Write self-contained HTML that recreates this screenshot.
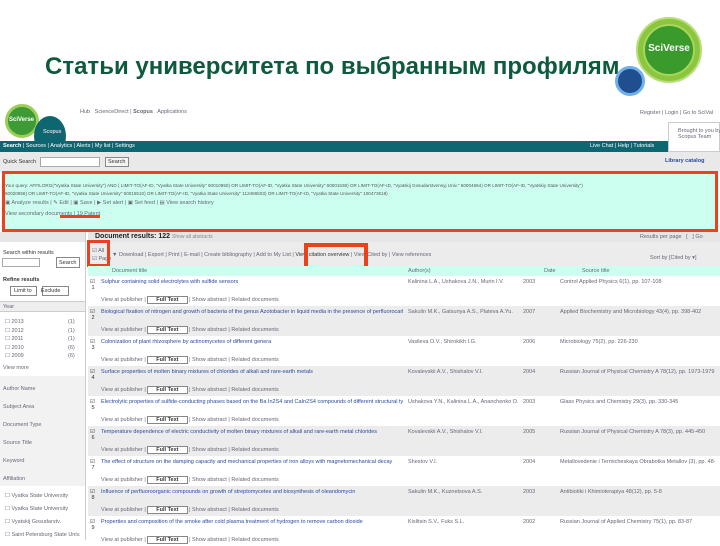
<!DOCTYPE html>
<html><head><meta charset="utf-8"><style>
*{margin:0;padding:0;box-sizing:border-box}
body{width:720px;height:540px;overflow:hidden;background:#fff;font-family:"Liberation Sans",sans-serif;position:relative}
.a{position:absolute}
.t{font-size:5.5px;color:#667;white-space:nowrap}
.l{color:#2a4aa0}
</style></head><body>
<div class="a" style="left:45px;top:53px;font-size:24px;color:#0d5a3c;font-weight:bold;font-family:'Liberation Sans',sans-serif">Статьи университета по выбранным профилям</div>
<!-- big logo -->
<div class="a" style="left:636px;top:17px;width:66px;height:66px;border-radius:50%;background:#8cc63f;border:2px solid #b8dd7a"></div>
<div class="a" style="left:643px;top:24px;width:52px;height:52px;border-radius:50%;background:#3a9a2c;border:2px solid #a6d65a"></div>
<div class="a" style="left:636px;top:43px;width:66px;text-align:center;color:#fff;font-size:10px;font-weight:bold">SciVerse</div>
<div class="a" style="left:615px;top:66px;width:30px;height:30px;border-radius:50%;background:#1f4f8f;border:3px solid #6fb0e8"></div>
<!-- screenshot header -->
<div class="a" style="left:5px;top:104px;width:34px;height:34px;border-radius:50%;background:#3e9a35;border:3px solid #9ccf5a"></div>
<div class="a t" style="left:9px;top:117px;color:#fff;font-weight:bold;font-size:6px">SciVerse</div>
<div class="a" style="left:34px;top:116px;width:32px;height:40px;border-radius:50%;background:#0e6670"></div>
<div class="a t" style="left:43px;top:129px;color:#fff">Scopus</div>
<div class="a t" style="left:80px;top:109px">Hub &nbsp; ScienceDirect | <b>Scopus</b> &nbsp; Applications</div>
<div class="a t" style="left:640px;top:110px">Register | Login | Go to SciVal</div>
<div class="a" style="left:0;top:141px;width:720px;height:11px;background:#0e6670"></div>
<div class="a t" style="left:3px;top:143px;color:#fff"><b>Search</b> | Sources | Analytics | Alerts | My list | Settings</div>
<div class="a t" style="left:590px;top:143px;color:#fff">Live Chat | Help | Tutorials</div>
<div class="a" style="left:668px;top:122px;width:52px;height:30px;background:#fff;border:1px solid #ccc"></div>
<div class="a t" style="left:678px;top:128px">Brought to you by<br>Scopus Team</div>
<div class="a" style="left:0;top:152px;width:720px;height:19px;background:#e9e9e9"></div>
<div class="a t" style="left:3px;top:159px;color:#333">Quick Search</div>
<div class="a" style="left:40px;top:157px;width:60px;height:10px;background:#fff;border:1px solid #aaa"></div>
<div class="a" style="left:105px;top:157px;width:24px;height:10px;background:#f4f4f4;border:1px solid #888"></div>
<div class="a t" style="left:108px;top:159px;color:#333">Search</div>
<div class="a t" style="left:665px;top:158px;color:#2a4aa0;font-weight:bold">Library catalog</div>
<!-- query box -->
<div class="a" style="left:2px;top:171px;width:716px;height:61px;border:3px solid #e8421e;background:#ccfff0"></div>
<div class="a t" style="left:5px;top:182px;color:#555;font-size:4.6px;line-height:8px">Your query: AFFILORG("Vyatka State University") AND ( LIMIT-TO(AF-ID, "Vyatka State University" 60010950) OR LIMIT-TO(AF-ID, "Vyatka State University" 60001638) OR LIMIT-TO(AF-ID, "Vyatskij Gosudarstvennyj Univ." 60004664) OR LIMIT-TO(AF-ID, "Vyatskiy State University")<br>60020958) OR LIMIT-TO(AF-ID, "Vyatka State University" 60015510) OR LIMIT-TO(AF-ID, "Vyatka State University" 112486503) OR LIMIT-TO(AF-ID, "Vyatka State University" 100473618)</div>
<div class="a t" style="left:5px;top:200px">▣ Analyze results | ✎ Edit | ▣ Save | ▶ Set alert | ▣ Set feed | ▤ View search history</div>
<div class="a t" style="left:5px;top:211px">View secondary documents | 19 Patent</div>
<div class="a" style="left:60px;top:215px;width:40px;height:3px;background:#e8421e"></div>
<!-- sidebar -->
<div class="a" style="left:0;top:232px;width:86px;height:308px;background:#fff;border-right:1px solid #ccc"></div>
<div class="a" style="left:0;top:232px;width:85px;height:10px;background:#e6e6e6"></div>
<div class="a t" style="left:3px;top:250px;color:#333">Search within results</div>
<div class="a" style="left:2px;top:258px;width:38px;height:9px;background:#fff;border:1px solid #aaa"></div>
<div class="a" style="left:56px;top:257px;width:24px;height:11px;background:#fff;border:1px solid #888"></div>
<div class="a t" style="left:59px;top:260px;color:#333">Search</div>
<div class="a t" style="left:3px;top:277px;color:#333;font-weight:bold">Refine results</div>
<div class="a" style="left:10px;top:286px;width:27px;height:10px;border:1px solid #888;background:#fff"></div>
<div class="a" style="left:42px;top:286px;width:27px;height:10px;border:1px solid #888;background:#fff"></div>
<div class="a t" style="left:14px;top:288px;color:#333">Limit to &nbsp;&nbsp;&nbsp;&nbsp; Exclude</div>
<div class="a" style="left:0;top:301px;width:85px;height:11px;background:#eee;border-top:1px solid #ccc;border-bottom:1px solid #ccc"></div>
<div class="a t" style="left:3px;top:304px">Year</div>
<div class="a t" style="left:5px;top:318px;line-height:8.5px">☐ 2013<br>☐ 2012<br>☐ 2011<br>☐ 2010<br>☐ 2009</div>
<div class="a t" style="left:68px;top:318px;line-height:8.5px">(1)<br>(1)<br>(1)<br>(6)<br>(6)</div>
<div class="a t" style="left:3px;top:365px">View more</div>
<div class="a" style="left:0;top:376px;width:85px;height:110px;background:#f2f2f2"></div>
<div class="a t" style="left:3px;top:380px;line-height:18px">Author Name<br>Subject Area<br>Document Type<br>Source Title<br>Keyword<br>Affiliation</div>
<div class="a t" style="left:5px;top:490px;line-height:13px">☐ Vyatka State University<br>☐ Vyatka State University<br>☐ Vyatskij Gosudarstv.<br>☐ Saint Petersburg State Univ.</div>
<!-- results -->
<div class="a" style="left:88px;top:232px;width:632px;height:10px;background:#e6e6e6"></div>
<div class="a t" style="left:95px;top:233px;color:#222;font-size:7px;font-weight:bold">Document results: 122 <span style="font-weight:normal;font-size:5px;color:#888">Show all abstracts</span></div>
<div class="a" style="left:88px;top:241px;width:22px;height:2px;background:#e8421e"></div>
<div class="a t" style="left:640px;top:234px">Results per page &nbsp; [ &nbsp; ] Go</div>
<div class="a" style="left:88px;top:242px;width:632px;height:24px;background:#ececec"></div>
<div class="a t" style="left:92px;top:247px;line-height:8px">☑ All<br>☑ Page</div>
<div class="a t" style="left:112px;top:252px">▼ Download | Export | Print | E-mail | Create bibliography | Add to My List | <span style="color:#333">View citation overview</span> | View Cited by | View references</div>
<div class="a t" style="left:650px;top:255px">Sort by [Cited by ▾]</div>
<div class="a" style="left:87px;top:240px;width:23px;height:27px;border:3px solid #e8421e"></div>
<div class="a" style="left:304px;top:243px;width:64px;height:30px;border:4px solid #e8421e"></div>
<div class="a" style="left:88px;top:266px;width:632px;height:10px;background:#ccfff0"></div>
<div class="a t" style="left:112px;top:268px">Document title<span style="position:absolute;left:296px">Author(s)</span><span style="position:absolute;left:432px">Date</span><span style="position:absolute;left:470px">Source title</span></div>
<div id="rows"></div>
<script>
var T=["Sulphur containing solid electrolytes with sulfide sensors","Biological fixation of nitrogen and growth of bacteria of the genus Azotobacter in liquid media in the presence of perfluorocarbons","Colonization of plant rhizosphere by actinomycetes of different genera","Surface properties of molten binary mixtures of chlorides of alkali and rare-earth metals","Electrolytic properties of sulfide-conducting phases based on the Ba In2S4 and CaIn2S4 compounds of different structural types","Temperature dependence of electric conductivity of molten binary mixtures of alkali and rare-earth metal chlorides","The effect of structure on the damping capacity and mechanical properties of iron alloys with magnetomechanical decay","Influence of perfluoroorganic compounds on growth of streptomycetes and biosynthesis of oleandomycin","Properties and composition of the smoke after cold plasma treatment of hydrogen to remove carbon dioxide"];
var A=["Kalinina L.A., Ushakova J.N., Murin I.V.","Sakulin M.K., Gatsunya A.S., Plateva A.Yu.","Vasileva O.V., Shirokikh I.G.","Kovalevskii A.V., Shishalov V.I.","Ushakova Y.N., Kalinina L.A., Ananchenko O.A.","Kovalevskii A.V., Shishalov V.I.","Shestov V.I.","Sakulin M.K., Kuznetsova A.S.","Kislitsin S.V., Fuks S.L."];
var S=["Control Applied Physics 6(1), pp. 107-108","Applied Biochemistry and Microbiology 43(4), pp. 398-402","Microbiology 75(2), pp. 226-230","Russian Journal of Physical Chemistry A 78(12), pp. 1973-1979","Glass Physics and Chemistry 29(3), pp. 330-345","Russian Journal of Physical Chemistry A 78(3), pp. 445-450","Metallovedenie i Termicheskaya Obrabotka Metallov (3), pp. 48-51","Antibiotiki i Khimioterapiya 48(12), pp. 5-8","Russian Journal of Applied Chemistry 75(1), pp. 83-87"];
var Y=[2003,2007,2006,2004,2003,2005,2004,2003,2002];
var h="",y=276;
for(var i=0;i<9;i++){
h+='<div class="a" style="left:88px;top:'+y+'px;width:632px;height:30px;background:'+(i%2?'#ececec':'#fff')+'"></div>';
h+='<div class="a t" style="left:90px;top:'+(y+3)+'px;color:#333">☑<br>&nbsp;'+(i+1)+'</div>';
h+='<div class="a t l" style="left:101px;top:'+(y+3)+'px;width:302px;overflow:hidden">'+T[i]+'</div>';
h+='<div class="a t" style="left:408px;top:'+(y+3)+'px;width:110px;overflow:hidden">'+A[i]+'</div>';
h+='<div class="a t" style="left:523px;top:'+(y+3)+'px">'+Y[i]+'</div>';
h+='<div class="a t" style="left:560px;top:'+(y+3)+'px;width:155px;overflow:hidden">'+S[i]+'</div>';
h+='<div class="a t" style="left:101px;top:'+(y+21)+'px">View at publisher | <span style="border:1px solid #888;background:#fff;padding:0 8px;color:#333;font-weight:bold">Full Text</span> | Show abstract | Related documents</div>';
y+=30;}
document.getElementById('rows').innerHTML=h;
</script>
</body></html>
